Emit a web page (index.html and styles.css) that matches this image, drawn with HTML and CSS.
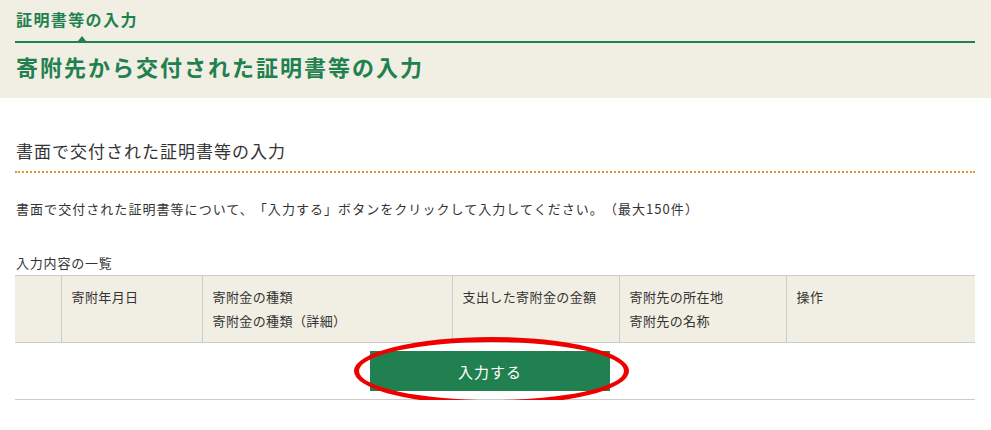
FILE: index.html
```html
<!DOCTYPE html>
<html lang="ja">
<head>
    <meta charset="UTF-8">
    <meta name="viewport" content="width=device-width, initial-scale=1.0">
    <title>寄附先から交付された証明書等の入力</title>
    <link rel="stylesheet" href="styles.css">
</head>
<body>
    <header class="page-header">
        <div class="crumb">
            <span class="crumb-title">証明書等の入力</span>
            <span class="crumb-arrow"></span>
        </div>
        <h1 class="page-title">寄附先から交付された証明書等の入力</h1>
    </header>

    <main class="content">
        <h2 class="section-title">書面で交付された証明書等の入力</h2>
        <p class="lead">書面で交付された証明書等について、「入力する」ボタンをクリックして入力してください。（最大150件）</p>

        <div class="list-label">入力内容の一覧</div>
        <table class="list-table">
            <colgroup>
                <col style="width: 46px">
                <col style="width: 141px">
                <col style="width: 250px">
                <col style="width: 167px">
                <col style="width: 167px">
                <col>
            </colgroup>
            <thead>
                <tr>
                    <th></th>
                    <th>寄附年月日</th>
                    <th>寄附金の種類<br>寄附金の種類（詳細）</th>
                    <th>支出した寄附金の金額</th>
                    <th>寄附先の所在地<br>寄附先の名称</th>
                    <th>操作</th>
                </tr>
            </thead>
            <tbody>
                <tr>
                    <td colspan="6" class="action-cell">
                        <div class="btn-wrap">
                            <button type="button" class="btn-input">入力する</button>
                            <!-- annotation ring -->
                            <div class="mark"></div>
                        </div>
                    </td>
                </tr>
            </tbody>
        </table>
    </main>
</body>
</html>
```

FILE: styles.css
```css
body {
    margin: 0;
    font-family: "Noto Sans CJK JP", "Noto Sans", sans-serif;
    color: #333;
    background-color: #fff;
    text-spacing-trim: space-all;
}

.page-header {
    background-color: #f1eee4;
    padding: 7px 16px 16px 15px;
    height: 75px;
}

.crumb {
    position: relative;
    padding: 0 0 10px 1px;
    border-bottom: 2px solid #21804f;
}

.crumb-title {
    display: block;
    font-size: 16px;
    line-height: 24px;
    font-weight: bold;
    color: #21804f;
    letter-spacing: 1.4px;
}

/* little pointer above the rule */
.crumb-arrow {
    position: absolute;
    left: 63px;
    bottom: 0;
    width: 0;
    height: 0;
    border-left: 4px solid transparent;
    border-right: 4px solid transparent;
    border-bottom: 5px solid #21804f;
}

.page-title {
    margin: 7px 0 0 1px;
    font-size: 22px;
    line-height: 32px;
    font-weight: bold;
    color: #21804f;
    letter-spacing: 2px;
}

.content {
    width: 960px;
    margin-left: 15px;
}

.section-title {
    margin: 40px 0 0 0;
    padding: 0 0 7px 1px;
    font-size: 17px;
    line-height: 26px;
    font-weight: normal;
    color: #333;
    letter-spacing: 1px;
    border-bottom: 2px dotted #e8922a;
}

.lead {
    margin: 26px 0 0 1px;
    font-size: 13px;
    line-height: 20px;
    letter-spacing: 1.05px;
}

.list-label {
    margin: 34px 0 2px 1px;
    font-size: 13px;
    line-height: 20px;
    letter-spacing: 0.8px;
}

.list-table {
    width: 960px;
    table-layout: fixed;
    border-collapse: collapse;
    font-size: 13px;
}

.list-table th {
    background-color: #f1eee4;
    font-weight: normal;
    text-align: left;
    vertical-align: top;
    padding: 9px 10px;
    line-height: 24px;
    letter-spacing: 0.4px;
    border-top: 1px solid #cccccc;
    border-bottom: 1px solid #cccccc;
    border-left: 1px solid #cccccc;
}

.list-table th:first-child {
    border-left: none;
}

.action-cell {
    padding: 8px 10px 8px 0;
    border-bottom: 1px solid #cccccc;
}

.btn-wrap {
    position: relative;
    width: 240px;
    margin: 0 auto;
}

.btn-input {
    display: block;
    width: 240px;
    height: 40px;
    border: none;
    background-color: #21804f;
    color: #fff;
    font-family: inherit;
    font-size: 15px;
    letter-spacing: 1px;
}

.mark {
    position: absolute;
    left: -16px;
    top: -14px;
    width: 275px;
    height: 68px;
    box-sizing: border-box;
    border: 5px solid #ee0000;
    border-radius: 50%;
    pointer-events: none;
}
```
